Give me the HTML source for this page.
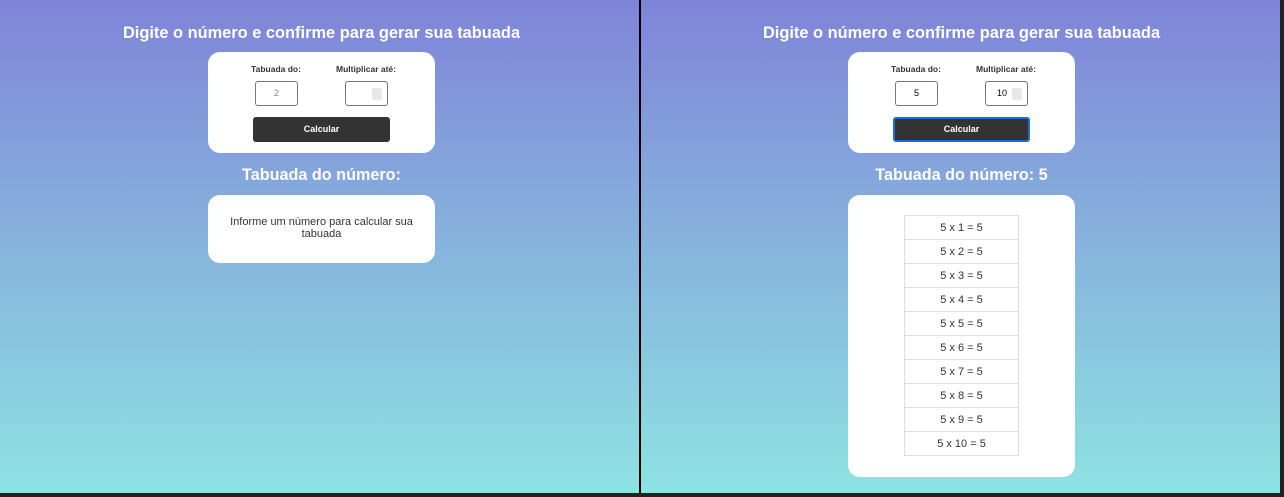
<!DOCTYPE html>
<html><head><meta charset="utf-8"><style>
*{box-sizing:border-box;margin:0;padding:0}
body{width:1284px;height:497px;background:#222;position:relative;overflow:hidden;font-family:"Liberation Sans",Arial,sans-serif}
.p{position:absolute;top:0;height:493px;width:640px;background:linear-gradient(#7f84d8,#8ee3e2)}
.h1{position:absolute;top:24px;left:0;width:643px;text-align:center;color:#fff;font-weight:bold;font-size:16.4px}
.card{position:absolute;left:208px;width:227px;background:#fff;border-radius:12px}
.lab{position:absolute;top:64px;font-size:8.5px;font-weight:bold;color:#333;text-align:center;width:80px}
.in{position:absolute;top:81px;width:43px;height:25px;border:1px solid #777;border-radius:3px;background:#fff;font-size:9px;text-align:center;line-height:23px;color:#000}
.sp{position:absolute;right:5px;top:6px;width:10px;height:12px;background:#e8e8e8;border-radius:2px}
.btn{position:absolute;left:253px;top:117px;width:137px;height:25px;background:#333;border-radius:3px;color:#fff;font-size:9px;font-weight:bold;text-align:center;line-height:25px}
.h2{position:absolute;top:166px;left:0;width:643px;text-align:center;color:#fff;font-weight:bold;font-size:16.2px}
table{position:absolute;left:904px;top:215px;width:115px;border-collapse:collapse}
td{border:1px solid #ddd;height:24px;text-align:center;font-size:11px;color:#333}
</style></head><body>
<div class="p" style="left:0">
<div class="h1">Digite o número e confirme para gerar sua tabuada</div>
<div class="card" style="top:52px;height:101px"></div>
<div class="lab" style="left:236px">Tabuada do:</div>
<div class="lab" style="left:326px">Multiplicar até:</div>
<div class="in" style="left:255px;color:#888">2</div>
<div class="in" style="left:345px"><div class="sp"></div></div>
<div class="btn">Calcular</div>
<div class="h2">Tabuada do número:</div>
<div class="card" style="top:195px;height:68px;text-align:center;font-size:11px;color:#333;padding:21px 18px 0;line-height:12px">Informe um número para calcular sua tabuada</div>
</div>
<div class="p" style="left:640px">
<div class="h1">Digite o número e confirme para gerar sua tabuada</div>
<div class="card" style="top:52px;height:101px"></div>
<div class="lab" style="left:236px">Tabuada do:</div>
<div class="lab" style="left:326px">Multiplicar até:</div>
<div class="in" style="left:255px">5</div>
<div class="in" style="left:345px;text-align:left;padding-left:11px">10<div class="sp"></div></div>
<div class="btn" style="border:2px solid #1a6fd6;line-height:21px">Calcular</div>
<div class="h2">Tabuada do número: 5</div>
<div class="card" style="top:195px;height:282px"></div>
</div>
<table>
<tr><td>5 x 1 = 5</td></tr><tr><td>5 x 2 = 5</td></tr><tr><td>5 x 3 = 5</td></tr><tr><td>5 x 4 = 5</td></tr><tr><td>5 x 5 = 5</td></tr><tr><td>5 x 6 = 5</td></tr><tr><td>5 x 7 = 5</td></tr><tr><td>5 x 8 = 5</td></tr><tr><td>5 x 9 = 5</td></tr><tr><td>5 x 10 = 5</td></tr>
</table>
<div style="position:absolute;left:639px;top:0;width:2px;height:493px;background:#000"></div>
</body></html>
